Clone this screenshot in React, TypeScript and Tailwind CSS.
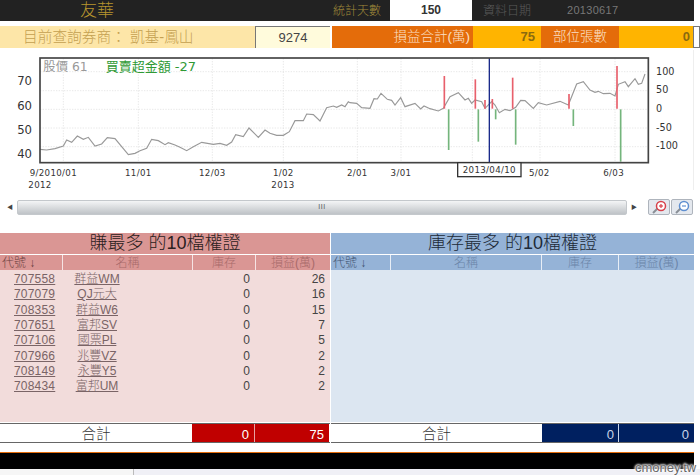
import React from 'react';

const FONT = 'font-["Liberation_Sans","Noto_Sans_CJK_TC",sans-serif]';

const leftRows = [
  ['707558', '群益WM', 0, 26],
  ['707079', 'QJ元大', 0, 16],
  ['708353', '群益W6', 0, 15],
  ['707651', '富邦SV', 0, 7],
  ['707106', '國票PL', 0, 5],
  ['707966', '兆豐VZ', 0, 2],
  ['708149', '永豐Y5', 0, 2],
  ['708434', '富邦UM', 0, 2],
];

// chart coordinates are 3x screen pixels
const priceA = '120,298 140,300 165,296 190,288 200,270 215,277 232,258 250,268 265,262 285,288 305,282 322,263 345,266 365,290 385,314 405,310 420,302 440,295 455,268 475,272 495,284 505,278 525,285 540,292 560,302 580,290 605,277 640,283 660,280 680,286 695,276 707,254 730,260 747,234 775,262 795,240 810,250 830,256 850,256 868,245 885,212 910,212 920,192 940,194 960,213 980,173 1000,168 1010,172 1025,165 1035,170 1045,155';
const priceB = [[0,158],[20,160],[35,173],[60,175],[72,146],[82,147],[93,130],[112,148],[125,151],[135,165],[152,143],[165,170],[195,160],[212,177],[222,168],[240,176],[265,183],[280,175],[300,140],[325,128],[345,150],[355,145],[365,160],[375,150],[395,155],[405,175],[425,155],[435,165],[448,188],[465,178],[480,182],[497,172],[512,151],[525,152],[550,175],[565,158],[590,165],[630,154],[655,165],[680,102],[700,95],[720,120],[735,127],[745,124],[760,131],[780,130],[795,138],[805,103],[825,95],[835,110],[855,86],[865,103],[875,100],[885,72]]
  .map(([x, y]) => `${x + 1050},${y}`).join(' ');

const redBars = [[283,78],[376,88],[405,150],[427,147],[488,83],[657,132],[801,48]];
const greenBars = [[296,300],[385,275],[437,208],[497,284],[670,228],[812,335]];
const vGrid = [190, 415, 637, 850, 1072, 1203, 1417, 1620, 1845];
const hGrid = [65, 122, 178, 234, 290];

const Chart = () => (
  <svg width="694" height="140" viewBox="0 0 2082 420" className="block">
    {hGrid.map((y) => <line key={y} x1="120" x2="1945" y1={y} y2={y} stroke="#ddd" strokeWidth="2" strokeDasharray="4 4" />)}
    {vGrid.map((x) => <line key={x} x1={x} x2={x} y1="25" y2="338" stroke="#ddd" strokeWidth="2" strokeDasharray="4 4" />)}
    <polyline points={priceA + ' ' + priceB} fill="none" stroke="#999" strokeWidth="3.5" />
    {redBars.map(([x, y]) => <line key={x} x1={x + 1050} x2={x + 1050} y1={y} y2="176" stroke="#e8606c" strokeWidth="5" />)}
    {greenBars.map(([x, y]) => <line key={x} x1={x + 1050} x2={x + 1050} y1="178" y2={y} stroke="#74b57c" strokeWidth="5" />)}
    <line x1="1468" x2="1468" y1="24" y2="338" stroke="#1a2a8a" strokeWidth="4" />
    <rect x="120" y="24" width="1825" height="314" fill="none" stroke="#444" strokeWidth="5" />
    <g fontFamily="DejaVu Sans, sans-serif" fill="#333">
      <g fontSize="35" textAnchor="end">
        <text x="96" y="105">70</text>
        <text x="96" y="179">60</text>
        <text x="96" y="252">50</text>
        <text x="96" y="324">40</text>
      </g>
      <g fontSize="29">
        <text x="1968" y="75">100</text>
        <text x="1968" y="130">50</text>
        <text x="1968" y="187">0</text>
        <text x="1968" y="242">-50</text>
        <text x="1968" y="298">-100</text>
      </g>
      <g fontSize="26" textAnchor="middle" letterSpacing="1">
        <text x="160" y="378">9/2010/01</text>
        <text x="415" y="378">11/01</text>
        <text x="637" y="378">12/03</text>
        <text x="850" y="378">1/02</text>
        <text x="1072" y="378">2/01</text>
        <text x="1203" y="378">3/01</text>
        <text x="1618" y="378">5/02</text>
        <text x="1841" y="378">6/03</text>
        <text x="120" y="413">2012</text>
        <text x="849" y="413">2013</text>
      </g>
    </g>
    <rect x="1373" y="338" width="190" height="42" fill="#fff" stroke="#333" strokeWidth="4" />
    <text x="1468" y="369" fontSize="26" letterSpacing="1" textAnchor="middle" fontFamily="DejaVu Sans, sans-serif" fill="#333">2013/04/10</text>
    <text x="130" y="62" fontSize="37" fill="#999" fontFamily="DejaVu Sans, Noto Sans CJK TC, sans-serif">股價 61</text>
    <text x="317" y="62" fontSize="39" fill="#2f9a35" fontFamily="DejaVu Sans, Noto Sans CJK TC, sans-serif">買賣超金額 -27</text>
  </svg>
);

const ZoomButton = ({ plus }: { plus: boolean }) => (
  <div className="w-[22px] h-[16px] bg-[#e4e8ee] border border-[#aeb4bc] rounded-[2px] flex items-center justify-center">
    <svg width="17" height="14" viewBox="0 0 17 14">
      <line x1="2" y1="13" x2="7" y2="8" stroke="#8a8f96" strokeWidth="2" />
      <circle cx="10" cy="6" r="4.5" fill="#fff" stroke={plus ? '#d8404a' : '#5f8fd0'} strokeWidth="1.5" />
      <line x1="8" y1="6" x2="12" y2="6" stroke={plus ? '#d8404a' : '#5f8fd0'} strokeWidth="1.2" />
      {plus && <line x1="10" y1="4" x2="10" y2="8" stroke="#d8404a" strokeWidth="1.2" />}
    </svg>
  </div>
);

const HeadCell = ({ children, text, left }: { children: React.ReactNode; text: string; left?: boolean }) => (
  <div className={`h-[15px] flex items-center text-[12px] font-light whitespace-nowrap ${text} ${left ? 'pl-[2px]' : 'justify-center'}`}>{children}</div>
);

export default function App() {
  return (
    <div className={`w-[700px] h-[475px] relative overflow-hidden bg-white flex flex-col ${FONT}`}>
      {/* top bar */}
      <div className="w-[694px] h-[21px] shrink-0 bg-[#222222] flex items-center">
        <span className="ml-[80px] w-[253px] text-[17px] font-light leading-none text-[#b8962e]">友華</span>
        <span className="w-[57px] text-[12px] font-light text-[#a08a3a]">統計天數</span>
        <div className="w-[82px] h-[21px] bg-white border-b border-[#555] flex items-center justify-center text-[12px] font-bold text-[#333]">150</div>
        <span className="ml-[11px] w-[84px] text-[12px] font-light text-[#5a5a5a]">資料日期</span>
        <span className="text-[11px] text-[#777] tracking-[0.3px]">20130617</span>
      </div>

      {/* query row */}
      <div className="mt-[5px] h-[22px] shrink-0 flex items-stretch text-white">
        <div className="w-[255px] bg-[#fde6a8] flex items-center pl-[23px] text-[14.7px] font-light text-[#c4a050] whitespace-nowrap">目前查詢券商： 凱基-鳳山</div>
        <div className="w-[75px] bg-[#fffbdc] border-t border-l border-[#777] flex items-center justify-center text-[13px] text-[#444]">9274</div>
        <div className="ml-[2px] w-[141px] bg-[#e46c0a] flex items-center justify-end pr-[3px] text-[13.5px] font-light whitespace-nowrap text-[#fbe0c8]">損益合計(萬)</div>
        <div className="w-[68px] bg-[#ffb400] flex items-center justify-end pr-[6px] text-[13px] font-bold text-[#8a6a10]">75</div>
        <div className="w-[78px] bg-[#e46c0a] flex items-center justify-center text-[13.5px] font-light text-[#fbe0c8]">部位張數</div>
        <div className="w-[74px] bg-[#ffb400] flex items-center justify-end pr-[3px] text-[13px] font-bold text-[#8a6a10]">0</div>
        <div className="w-[7px] bg-white border border-[#777]"></div>
      </div>

      {/* chart panel */}
      <div className="mt-[2px] w-[694px] h-[140px] shrink-0 border-r border-[#eeeeee]">
        <Chart />
      </div>

      {/* scrollbar */}
      <div className="mt-[9px] h-[16px] shrink-0 flex items-center">
        <div className="w-[17px] flex justify-center pl-[3px] text-[6px] text-[#444]">◀</div>
        <div className="w-[610px] h-[15px] rounded-[2px] border border-[#c4c8cc] bg-gradient-to-b from-[#f4f5f6] to-[#bfc3c7] flex items-center justify-center text-[7px] text-[#555]">
          <span className="tracking-[0.5px]">III</span>
        </div>
        <div className="w-[14px] flex justify-center text-[6px] text-[#444]">▶</div>
        <div className="ml-[7px] flex gap-[1px]">
          <ZoomButton plus />
          <ZoomButton plus={false} />
        </div>
      </div>

      {/* tables */}
      <div className="mt-[18px] h-[210px] shrink-0 flex gap-[1px]">
        <div className="w-[330px] flex flex-col">
          <div className="h-[21px] bg-[#da9694] flex items-center justify-center text-[18px] font-light text-[#2a2020] whitespace-nowrap">賺最多 的10檔權證</div>
          <div className="mt-[1px] grid grid-cols-[62px_129px_62px_74px] gap-x-[1px] [&>*]:bg-[#da9694] bg-[#f6e4e4]">
            <HeadCell text="text-[#6b4040]" left>代號 ↓</HeadCell>
            <HeadCell text="text-[#a86a6a]">名稱</HeadCell>
            <HeadCell text="text-[#a86a6a]">庫存</HeadCell>
            <HeadCell text="text-[#a86a6a]">損益(萬)</HeadCell>
          </div>
          <div className="flex-1 bg-[#f2dcdb] pt-[1.5px]">
            {leftRows.map(([code, name, stock, pnl]) => (
              <div key={code as string} className="h-[15.3px] grid grid-cols-[63px_130px_62px_75px] items-center text-[12px] leading-none text-[#444]">
                <a className="pl-[14px] underline text-[#7a6466] tracking-[0.2px]">{code}</a>
                <div className="w-[66px] ml-[1px] text-center"><a className="underline font-light text-[#7a6466] whitespace-nowrap">{name}</a></div>
                <div className="text-right pr-[5px]">{stock}</div>
                <div className="text-right pr-[5px]">{pnl}</div>
              </div>
            ))}
          </div>
          <div className="h-[20px] mt-[1px] border-y border-[#666] bg-white grid grid-cols-[192px_63px_74px] grid-rows-[18px] text-white text-[13px] leading-none">
            <div className="flex items-center justify-center text-[14.5px] font-light text-[#333] pt-[3px]">合計</div>
            <div className="bg-[#c00000] flex items-center justify-end pr-[5px] pt-[2px] border-r border-[#e8a0a0]">0</div>
            <div className="bg-[#c00000] flex items-center justify-end pr-[5px] pt-[2px]">75</div>
          </div>
        </div>

        <div className="w-[363px] flex flex-col">
          <div className="h-[21px] bg-[#95b3d7] flex items-center justify-center text-[18px] font-light text-[#202a38] whitespace-nowrap">庫存最多 的10檔權證</div>
          <div className="mt-[1px] grid grid-cols-[59px_150px_76px_75px] gap-x-[1px] bg-[#e8eef6] [&>*]:bg-[#95b3d7]">
            <HeadCell text="text-[#3f5270]" left>代號 ↓</HeadCell>
            <HeadCell text="text-[#6a84a8]">名稱</HeadCell>
            <HeadCell text="text-[#6a84a8]">庫存</HeadCell>
            <HeadCell text="text-[#6a84a8]">損益(萬)</HeadCell>
          </div>
          <div className="flex-1 bg-[#dce6f1]"></div>
          <div className="h-[20px] mt-[1px] border-y border-[#666] bg-white grid grid-cols-[211px_77px_75px] grid-rows-[18px] text-[#c8d4e8] text-[13px] leading-none">
            <div className="flex items-center justify-center text-[14.5px] font-light text-[#333] pt-[3px]">合計</div>
            <div className="bg-[#002060] flex items-center justify-end pr-[4px] pt-[2px] border-r border-[#c8d4e8]">0</div>
            <div className="bg-[#002060] flex items-center justify-end pr-[5px] pt-[2px]">0</div>
          </div>
        </div>
      </div>

      {/* footer */}
      <div className="mt-[9px] w-[694px] h-[1px] shrink-0 bg-[#e46c0a]"></div>
      <div className="w-[694px] h-[16px] shrink-0 bg-black"></div>
      <div className="flex-1 flex">
        <div className="w-[134px] bg-[#f6f6f6] border-r border-[#bbb]"></div>
        <div className="flex-1 bg-[#f0f0f6]"></div>
      </div>

      <span className="absolute left-[635px] top-[458px] text-[13px] font-['Liberation_Sans',sans-serif] text-[#666] [text-shadow:0_0_2px_#fff,0_0_2px_#fff,0_0_3px_#fff,0_0_3px_#fff]">cmoney.tw</span>
    </div>
  );
}
